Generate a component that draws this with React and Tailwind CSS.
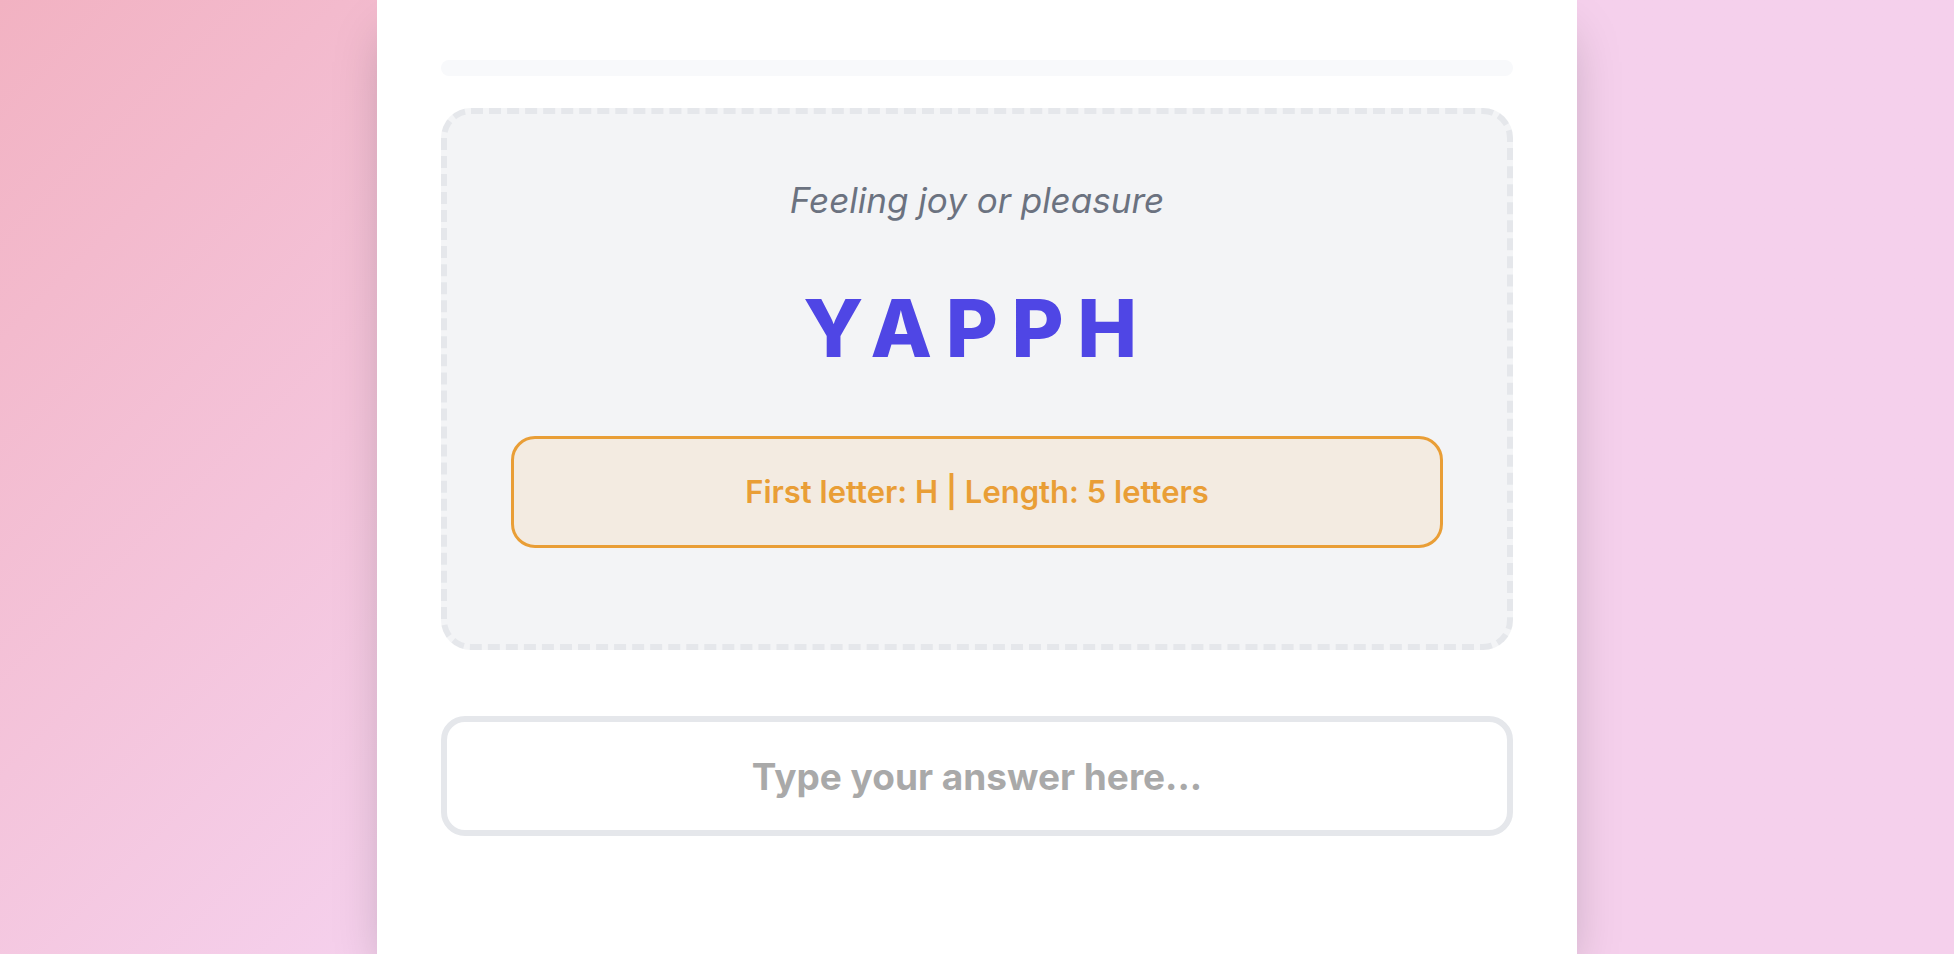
import React from 'react';

export default function App() {
  return (
    <div className="min-h-screen bg-linear-135 from-[#f2b2c2] to-[#f5d0ec] to-45% flex justify-center font-['Inter','Noto_Sans',sans-serif]">
      <div className="w-[1200px] min-h-screen bg-white shadow-2xl px-16 pt-[60px] pb-16">
        {/* progress track */}
        <div className="h-4 rounded-full bg-[#f8f9fb]" />

        {/* clue card */}
        <div className="mt-8 flex flex-col items-center rounded-[30px] border-[6px] border-dashed border-[#e5e7eb] bg-[#f3f4f6] px-16 pt-[66px] pb-24">
          <p className="text-[35px] leading-10 italic text-[#6b7280]">Feeling joy or pleasure</p>
          <div className="mt-[68px] text-[80px] leading-none font-extrabold tracking-[0.17em] text-[#4f46e5]">
            YAPPH
          </div>
          <div className="mt-[68px] w-full rounded-3xl border-[3px] border-[#e99e36] bg-[#f3ebe1] py-[35px] text-center text-[31px] leading-9 font-semibold text-[#e99e36]">
            First letter: H | Length: 5 letters
          </div>
        </div>

        {/* answer input */}
        <input
          type="text"
          placeholder="Type your answer here..."
          className="mt-[66px] block h-[120px] w-full rounded-3xl border-[6px] border-[#e5e7eb] bg-white text-center text-[37px] font-bold text-gray-800 outline-none placeholder:text-[#a9a9a9]"
        />
      </div>
    </div>
  );
}
